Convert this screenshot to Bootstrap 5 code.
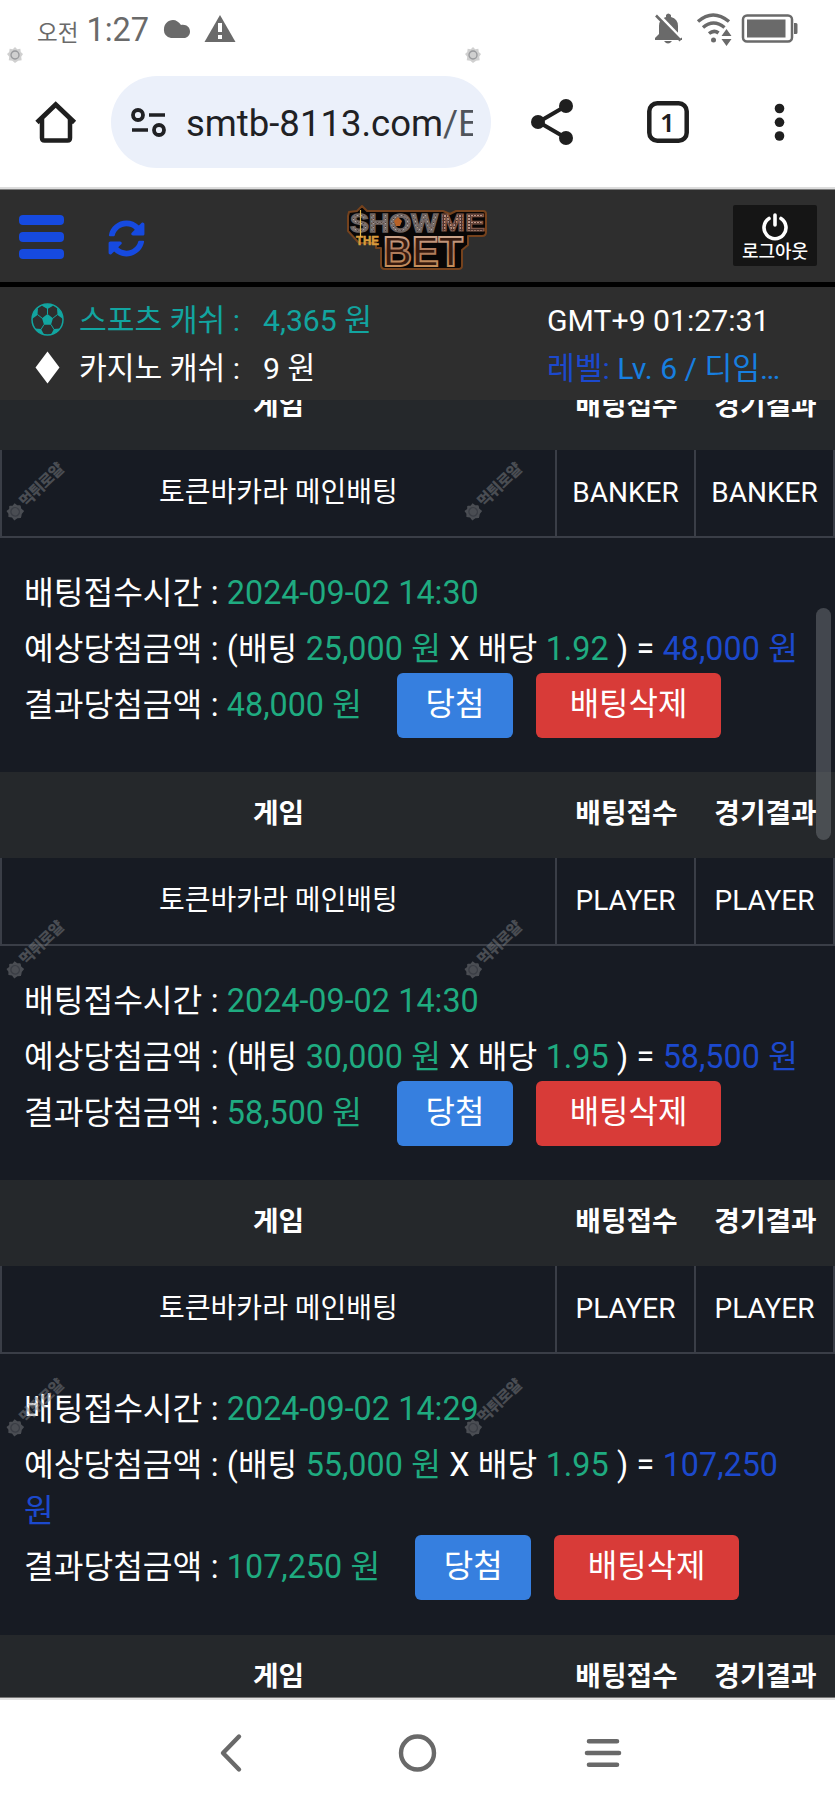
<!DOCTYPE html>
<html lang="ko">
<head>
<meta charset="utf-8">
<meta name="viewport" content="width=device-width, initial-scale=1">
<title>배팅내역</title>
<link rel="stylesheet" href="https://cdn.jsdelivr.net/npm/bootstrap@5.3.0/dist/css/bootstrap.min.css">
<style>
body{font-family:Roboto,"Noto Sans CJK KR",sans-serif;background:#fff;color:#fff;overflow:hidden}
svg{display:block;flex:none}
.phone{width:835px;height:1809px;overflow:hidden}
.status{height:60px;padding:0 37px 0 37px;color:#6a6a6a}
.status .clock{font-size:32.5px;line-height:40px;padding-top:10px}
.status .ampm{font-size:22.5px}
.chrome{height:127px;padding:16px 35px 0 35px;color:#1f1f1f}
.pill{width:380px;height:92px;border-radius:46px;background:#ebf0fa;margin-left:34px;padding-left:19px}
.url{width:287px;font-size:36.5px;line-height:92px;margin-left:20px;padding-top:3px;color:#202124}
.url i{font-style:normal;color:#50545b}
.edge-top{height:3px;background:linear-gradient(#dcdcdc 0 66%,#7d7d7d 66%)}
.edge-bottom{height:3px;background:linear-gradient(#777 0 33%,#e2e2e2 33%)}
.site-head{height:92px;background:#2e2e2e;padding:0 18px 0 19px}
.menu-btn span{display:block;width:45px;height:10px;border-radius:4px;background:#164ae0}
.logout{width:84px;height:61px;background:#151515;border-radius:2px;margin-top:15px;font-size:18px;line-height:22px;font-weight:500;color:#fff}
.cash{height:118px;background:#2e2e2e;border-top:5px solid #000;font-size:30.2px;line-height:48px;padding:10px 31px 0}
.cash .teal{color:#12a5a0}
.cash .label-w{width:184px;margin-left:15px}
.cash .right-w{width:257px}
.view{height:1297px;background:#171b23;overflow:hidden}
.bets{margin-top:-36px}
.g3{display:grid;grid-template-columns:557px 139px 139px;text-align:center}
.bet-head{height:86px;background:#25282b;font-weight:700;font-size:27.8px;line-height:84px}
.bet-row{height:88px;font-size:28px;line-height:85px;border-bottom:2px solid #3a3e47;border-left:2px solid #3a3e47;grid-template-columns:555px 139px 139px}
.bet-row>div{border-right:2px solid #3a3e47}
.info{padding:32px 24px 44px;font-size:32.3px;line-height:46px;word-spacing:.35px}
.info p{margin:0 0 10px}
.info p:last-child{margin:0;height:46px}
.grn{color:#1fab80}
.blu{color:#1c49cd}
.bet-btn{height:65px;margin-top:-9px;border:0;border-radius:6px;color:#fff;font-size:32px;line-height:46px;padding:8px 0 11px}
.win{width:116px;background:#367fdf;margin-left:35px}
.del{width:185px;background:#d83b38;margin-left:23px}
.scroll-thumb{left:816px;top:608px;width:15px;height:232px;border-radius:8px;background:rgba(112,115,122,.5)}
.sysnav{height:109px;padding-bottom:4px}
.stamp{width:76px;height:20px;transform:rotate(-44deg);font-size:15.5px;line-height:20px;font-weight:900;color:rgba(125,128,132,.5);letter-spacing:-.7px;gap:2px;white-space:nowrap}
.stamp.on-white{width:20px;transform:none;color:rgba(150,150,150,.45)}
</style>
</head>
<body>
<div class="phone position-relative d-flex flex-column">

  <div class="status d-flex align-items-start">
    <div class="clock"><span class="ampm">오전</span> 1:27</div>
    <svg class="mt-3" style="margin-left:14px" width="28" height="26" viewBox="0 0 28 26"><path fill="#6a6a6a" d="M8 22a8 8 0 0 1-7-9C1 8 5 4 10 4c3 0 6 2 8 5 5-1 9 2 9 6.500 0 4-3 6.500-6 6.500z"/></svg>
    <svg style="margin:14px 0 0 13px" width="32" height="29" viewBox="0 0 32 29"><path fill="#6a6a6a" d="M16 1 31.500 28H.5z"/><path stroke="#fff" stroke-width="4" d="M16 9v9m0 3v4"/></svg>
    <div class="ms-auto d-flex" style="padding-top:12px">
      <svg width="29" height="33" viewBox="0 0 29 33"><path fill="#6a6a6a" d="M1 28v-2l4-4v-8q0-7 7-9V3q2-3 5 0v2q7 2 7 9v8l4 4v2zM10 29h8q-4 5-8 0"/><path stroke="#fff" stroke-width="3" d="m4 2 23 24"/><path stroke="#6a6a6a" stroke-width="2.600" d="m2 3.500 24.500 25"/></svg>
      <svg style="margin-left:12px" width="38" height="35" viewBox="0 0 38 35" fill="none" stroke="#6a6a6a" stroke-width="3.500"><path d="M3 9.500q15-13 31 0M8 15.500q10.500-9 21.500 0M14 21.500q5-4 9.500-.5"/><circle cx="18.500" cy="28" r="2.500" fill="#6a6a6a" stroke="none"/><path fill="#6a6a6a" stroke="none" d="m31.500 17 5 7h-10zm0 17 5-7h-10z"/></svg>
      <svg style="margin-left:8px" width="57" height="33" viewBox="0 0 57 33"><rect x="2" y="3.500" width="49" height="26" rx="4" fill="none" stroke="#6a6a6a" stroke-width="2.500"/><path fill="#6a6a6a" d="M6 7.500h38.500v18H6zM53 11h2q1.500 0 1.500 1.500v8q0 1.500-1.500 1.500h-2z"/></svg>
    </div>
  </div>

  <div class="chrome d-flex">
    <svg style="margin-top:25px" width="42" height="43" viewBox="0 0 42 43" fill="none" stroke="#1f1f1f" stroke-width="4.500"><path d="M2 21.500 20.700 3.500 39.500 21.500" stroke-width="4.800"/><path d="M7 18v19q0 2.500 2.500 2.500h23q2.500 0 2.500-2.500V18"/></svg>
    <div class="pill d-flex align-items-center">
      <svg width="36" height="32" viewBox="0 0 36 32" fill="none" stroke="#202124" stroke-width="3.800"><circle cx="8" cy="9" r="5"/><circle cx="29" cy="24" r="5"/><path stroke-width="3.500" d="M19 9h16M2 24h16"/></svg>
      <div class="url text-nowrap overflow-hidden">smtb-8113.com<i>/E</i></div>
    </div>
    <svg style="margin:22px 0 0 40px" width="43" height="48" viewBox="0 0 43 48"><path fill="none" stroke="#1f1f1f" stroke-width="4" d="M35 8 7.500 24 35 40"/><g fill="#1f1f1f"><circle cx="35" cy="8" r="7"/><circle cx="7" cy="24" r="7"/><circle cx="35" cy="40" r="7"/></g></svg>
    <svg style="margin:25px 0 0 73px" width="42" height="42" viewBox="0 0 42 42"><rect x="2.300" y="2.300" width="37.400" height="37.400" rx="8" fill="none" stroke="#1f1f1f" stroke-width="4.500"/><text x="20.500" y="30.500" font-family="Noto Sans" font-weight="600" font-size="26" text-anchor="middle" fill="#1f1f1f">1</text></svg>
    <svg style="margin:27px 0 0 85px" width="11" height="40" viewBox="0 0 11 40" fill="#1f1f1f"><circle cx="5.500" cy="5.500" r="4.800"/><circle cx="5.500" cy="19.300" r="4.800"/><circle cx="5.500" cy="33" r="4.800"/></svg>
  </div>
  <div class="edge-top"></div>

  <header class="site-head d-flex align-items-start">
    <div class="menu-btn d-flex flex-column" style="gap:7px;margin-top:25px"><span></span><span></span><span></span></div>
    <svg style="margin:30px 0 0 44px" width="37" height="37" viewBox="0 0 512 512" fill="#164ae0"><path d="M370.700 133.300C339.500 104 298.900 88 255.800 88c-77.500.1-144.300 53.200-162.800 126.900-1.300 5.400-6.100 9.100-11.700 9.100H24.100c-7.500 0-13.200-6.800-11.800-14.200C33.900 94.900 134.800 8 256 8c66.400 0 126.800 26.100 171.300 68.700L463 41c15.100-15.100 41-4.400 41 17v134c0 13.300-10.700 24-24 24H346c-21.400 0-32.100-25.900-17-41zM32 296h134c21.400 0 32.100 25.900 17 41l-41.800 41.800c31.300 29.300 71.800 45.300 114.900 45.200 77.400-.1 144.300-53.100 162.800-126.800 1.300-5.400 6.100-9.100 11.700-9.100h57.300c7.500 0 13.200 6.800 11.800 14.200C478.100 417.100 377.200 504 256 504c-66.400 0-126.800-26.100-171.300-68.700L49 471c-15.100 15.100-41 4.400-41-17V320c0-13.300 10.700-24 24-24z"/></svg>
    <svg style="margin:13px 0 0 200px" width="144" height="70" viewBox="0 0 144 70">
      <defs>
        <linearGradient id="gold" x2="0" y2="1"><stop stop-color="#dfc0aa"/><stop offset=".5" stop-color="#ac7859"/><stop offset="1" stop-color="#d29a5c"/></linearGradient>
        <pattern id="speck" width="4" height="4" patternUnits="userSpaceOnUse"><path fill="#79706f" d="M0 0h4v4H0z"/><path fill="#b1a5a1" d="M0 0h1v1H0zm2 2h1v1H2z"/><path fill="#503f3b" d="M2 0h1v1H2zM0 3h1v1H0z"/></pattern>
        <pattern id="bulbs" width="3" height="3" patternUnits="userSpaceOnUse"><path fill="#49302a" d="M0 0h3v3H0z"/><path fill="#b99487" d="M0 0h2v2H0z"/></pattern>
      </defs>
      <path fill="#080606" stroke="#75421d" stroke-width="2" stroke-linejoin="round" d="M4 9 12 8l5-5 5 5h76l7 3 6-3h27q3 0 3 3v18q0 4-4 4h-14v9l-6 5v16q0 3-4 3H40q-4 0-4-4V45h-5v-5H14L3 28V13z"/>
      <g font-family="Liberation Sans" font-weight="700">
        <text x="5" y="29" font-size="25" textLength="88" lengthAdjust="spacingAndGlyphs" fill="url(#speck)" stroke="#6f6460" stroke-width="1.400">SHOW</text>
        <text x="95" y="28" font-size="24" textLength="45" lengthAdjust="spacingAndGlyphs" fill="url(#bulbs)" stroke="#7d5648" stroke-width="1.200">ME</text>
        <text x="11" y="42" font-size="13" textLength="23" lengthAdjust="spacingAndGlyphs" fill="#d99c3d" stroke="#d99c3d" stroke-width=".6">THE</text>
        <text x="38" y="63" font-size="43" textLength="80" lengthAdjust="spacingAndGlyphs" fill="#35190e" stroke="url(#gold)" stroke-width="2">BET</text>
      </g>
      <path stroke="#e5b94a" stroke-width="1.200" d="M15.500 7v27"/><path fill="#b86226" d="m53 14 4 4-2 5h-4l-2-5z"/>
    </svg>
    <div class="logout ms-auto d-flex flex-column align-items-center">
      <svg style="margin-top:8px" width="28" height="28" viewBox="0 0 28 28" fill="none" stroke="#fff" stroke-width="3.600" stroke-linecap="round"><path d="M8 5.500a11 11 0 1 0 12 0M14 2v10"/></svg>
      <span>로그아웃</span>
    </div>
  </header>

  <section class="cash">
    <div class="d-flex teal">
      <svg style="margin-top:6px" width="33" height="33" viewBox="0 0 33 33"><circle cx="16.500" cy="16.500" r="15.500" fill="none" stroke="#12a5a0" stroke-width="1.500"/><g fill="#12a5a0"><path d="m16.500 11 5.500 4.200-2 6.600h-7l-2-6.600zM10.500 2.500l6 3.500 6-3.500q-6-3-12 0M1 16l5.500-4 .5-7Q1 9 1 16m31 0-5.500-4-.5-7q6 4 6 11M4 25.500l6 .5 3 5.500q-6-1-9-6m25 0-6 .5-3 5.500q6-1 9-6"/></g><path fill="none" stroke="#12a5a0" stroke-width="1" d="M16.500 5v6M6.500 11.500l5 4m15-4-5 4m-8.500 6-3 5m10-5 3 5"/></svg>
      <span class="label-w">스포츠 캐쉬 :</span><span>4,365 원</span>
      <span class="right-w text-white ms-auto">GMT+9 01:27:31</span>
    </div>
    <div class="d-flex">
      <svg style="margin-top:6px" width="33" height="33" viewBox="0 0 33 33"><path fill="#fff" d="m16.500.5 12 16-12 16-12-16z"/></svg>
      <span class="label-w">카지노 캐쉬 :</span><span>9 원</span>
      <span class="right-w ms-auto text-nowrap" style="color:#177fe0"><span class="blu">레벨:</span> Lv. 6 / 디임…</span>
    </div>
  </section>

  <main class="view">
    <div class="bets">
      <div class="bet-head g3"><div>게임</div><div>배팅접수</div><div>경기결과</div></div>
      <div class="bet-row g3"><div>토큰바카라 메인배팅</div><div>BANKER</div><div>BANKER</div></div>
      <div class="info">
        <p>배팅접수시간 : <span class="grn">2024-09-02 14:30</span></p>
        <p>예상당첨금액 : (배팅 <span class="grn">25,000 원</span> X 배당 <span class="grn">1.92</span> ) = <span class="blu">48,000 원</span></p>
        <p class="d-flex align-items-start"><span>결과당첨금액 : <span class="grn">48,000 원</span></span><button class="btn bet-btn win">당첨</button><button class="btn bet-btn del">배팅삭제</button></p>
      </div>

      <div class="bet-head g3"><div>게임</div><div>배팅접수</div><div>경기결과</div></div>
      <div class="bet-row g3"><div>토큰바카라 메인배팅</div><div>PLAYER</div><div>PLAYER</div></div>
      <div class="info">
        <p>배팅접수시간 : <span class="grn">2024-09-02 14:30</span></p>
        <p>예상당첨금액 : (배팅 <span class="grn">30,000 원</span> X 배당 <span class="grn">1.95</span> ) = <span class="blu">58,500 원</span></p>
        <p class="d-flex align-items-start"><span>결과당첨금액 : <span class="grn">58,500 원</span></span><button class="btn bet-btn win">당첨</button><button class="btn bet-btn del">배팅삭제</button></p>
      </div>

      <div class="bet-head g3"><div>게임</div><div>배팅접수</div><div>경기결과</div></div>
      <div class="bet-row g3"><div>토큰바카라 메인배팅</div><div>PLAYER</div><div>PLAYER</div></div>
      <div class="info pb-5">
        <p>배팅접수시간 : <span class="grn">2024-09-02 14:29</span></p>
        <p>예상당첨금액 : (배팅 <span class="grn">55,000 원</span> X 배당 <span class="grn">1.95</span> ) = <span class="blu">107,250<br>원</span></p>
        <p class="d-flex align-items-start" style="margin-bottom:-3px"><span>결과당첨금액 : <span class="grn">107,250 원</span></span><button class="btn bet-btn win">당첨</button><button class="btn bet-btn del">배팅삭제</button></p>
      </div>

      <div class="bet-head g3"><div>게임</div><div>배팅접수</div><div>경기결과</div></div>
    </div>
  </main>
  <div class="edge-bottom"></div>

  <nav class="sysnav d-flex align-items-center">
    <svg style="margin-left:219px" width="24" height="40" viewBox="0 0 24 40" fill="none" stroke="#696969" stroke-width="4.400" stroke-linecap="round" stroke-linejoin="round"><path d="M20 3.500 4 20l16 16.500"/></svg>
    <svg style="margin-left:155px" width="40" height="40" viewBox="0 0 40 40"><circle cx="19.500" cy="20" r="16.500" fill="none" stroke="#696969" stroke-width="4.400"/></svg>
    <svg style="margin-left:146px" width="38" height="40" viewBox="0 0 38 40" stroke="#696969" stroke-width="4.600" stroke-linecap="round"><path d="M5 8.300h28M3 20h32M5 31.700h28"/></svg>
  </nav>

  <div class="scroll-thumb position-absolute"></div>

  <svg width="0" height="0" class="position-absolute"><symbol id="chip" viewBox="0 0 18 18"><path d="m9 0 2.500 2.500L15 2l.5 3.500L18 8l-2 3 .5 4-4 .5L9 18l-3-2.500-4-.5.5-4L0 8l2.500-2.500L3 2l3.500.5z" fill="currentColor"/><circle cx="9" cy="9" r="4.500" fill="none" stroke="#171b23" stroke-opacity=".3" stroke-width="1.500"/></symbol></svg>
  <div class="stamp on-white position-absolute" style="left:7px;top:47px"><svg width="16" height="16"><use href="#chip"/></svg></div>
  <div class="stamp on-white position-absolute" style="left:465px;top:47px"><svg width="16" height="16"><use href="#chip"/></svg></div>
  <div class="stamp position-absolute d-flex align-items-center" style="left:-2px;top:481px"><svg width="17" height="17"><use href="#chip"/></svg><span>먹튀로얄</span></div>
  <div class="stamp position-absolute d-flex align-items-center" style="left:456px;top:481px"><svg width="17" height="17"><use href="#chip"/></svg><span>먹튀로얄</span></div>
  <div class="stamp position-absolute d-flex align-items-center" style="left:-2px;top:939px"><svg width="17" height="17"><use href="#chip"/></svg><span>먹튀로얄</span></div>
  <div class="stamp position-absolute d-flex align-items-center" style="left:456px;top:939px"><svg width="17" height="17"><use href="#chip"/></svg><span>먹튀로얄</span></div>
  <div class="stamp position-absolute d-flex align-items-center" style="left:-2px;top:1397px"><svg width="17" height="17"><use href="#chip"/></svg><span>먹튀로얄</span></div>
  <div class="stamp position-absolute d-flex align-items-center" style="left:456px;top:1397px"><svg width="17" height="17"><use href="#chip"/></svg><span>먹튀로얄</span></div>
</div>
<script src="https://cdn.jsdelivr.net/npm/bootstrap@5.3.0/dist/js/bootstrap.bundle.min.js"></script>
</body>
</html>
